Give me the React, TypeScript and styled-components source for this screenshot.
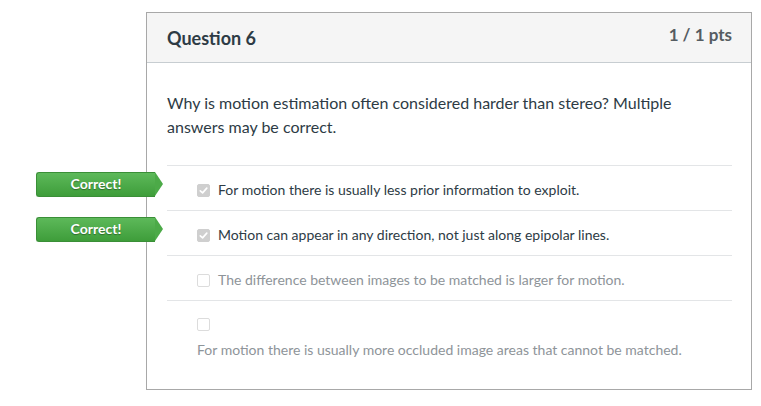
import styled, { createGlobalStyle } from 'styled-components';

const GlobalStyle = createGlobalStyle`
  body {
    margin: 0;
    background: #fff;
    font-family: Lato, 'Noto Sans', sans-serif;
    color: #2d3b45;
  }
`;

interface Answer {
  text: string;
  checked: boolean;
  correct: boolean;
  wrap?: boolean;
}

const answers: Answer[] = [
  { text: 'For motion there is usually less prior information to exploit.', checked: true, correct: true },
  { text: 'Motion can appear in any direction, not just along epipolar lines.', checked: true, correct: true },
  { text: 'The difference between images to be matched is larger for motion.', checked: false, correct: false },
  {
    text: 'For motion there is usually more occluded image areas that cannot be matched.',
    checked: false,
    correct: false,
    wrap: true,
  },
];

const CheckIcon = () => (
  <svg width="11" height="11" viewBox="0 0 12 12">
    <path d="M2.5 6.3 L5 8.6 L9.6 3.4" fill="none" stroke="#fff" strokeWidth="1.8" strokeLinecap="round" strokeLinejoin="round" />
  </svg>
);

const App = () => {
  return (
    <Page>
      <GlobalStyle />
      <Card>
        <Header>
          <Title>Question 6</Title>
          <Points>1 / 1 pts</Points>
        </Header>
        <Body>
          <QuestionText>
            Why is motion estimation often considered harder than stereo? Multiple answers may be correct.
          </QuestionText>
          <AnswerList>
            {answers.map((a) => (
              <AnswerRow key={a.text} wrap={!!a.wrap}>
                {a.correct && <CorrectFlag>Correct!</CorrectFlag>}
                <Box checked={a.checked} wrap={!!a.wrap}>
                  {a.checked && <CheckIcon />}
                </Box>
                <Label checked={a.checked} wrap={!!a.wrap}>
                  {a.text}
                </Label>
              </AnswerRow>
            ))}
          </AnswerList>
        </Body>
      </Card>
    </Page>
  );
};

export default App;

const Page = styled.div`
  padding: 12px 9px 0 146px;
`;

const Card = styled.div`
  width: 604px;
  border: 1px solid #a8a8a8;
  background: #fff;
`;

const Header = styled.div`
  display: flex;
  justify-content: space-between;
  align-items: flex-start;
  height: 49px;
  padding: 0 19px 0 20px;
  background: #f5f5f5;
  border-bottom: 1px solid #c7cdd1;
`;

const Title = styled.h2`
  margin: 13px 0 0;
  font-size: 18px;
  line-height: 24px;
  font-weight: 700;
  color: #2d3b45;
`;

const Points = styled.div`
  margin-top: 12px;
  font-size: 17px;
  line-height: 20px;
  font-weight: 700;
  color: #555c62;
`;

const Body = styled.div`
  padding: 28px 19px 19px 20px;
`;

const QuestionText = styled.p`
  margin: 0 0 26px;
  font-size: 16px;
  line-height: 24px;
  color: #2d3b45;
`;

const AnswerList = styled.div`
  display: flex;
  flex-direction: column;
`;

const AnswerRow = styled.div<{ wrap: boolean }>`
  position: relative;
  display: flex;
  flex-wrap: ${({ wrap }) => (wrap ? 'wrap' : 'nowrap')};
  align-items: ${({ wrap }) => (wrap ? 'flex-start' : 'center')};
  min-height: 20px;
  padding: 14px 0 10px 30px;
  border-top: 1px solid #e3e5e7;
`;

const CorrectFlag = styled.div`
  position: absolute;
  left: -131px;
  top: 6px;
  width: 119px;
  height: 25px;
  box-sizing: border-box;
  padding-bottom: 3px;
  display: flex;
  align-items: center;
  justify-content: center;
  background: linear-gradient(#5db95a, #3e9d3a);
  border: 1px solid #3a8f37;
  border-right: none;
  border-radius: 3px 0 0 3px;
  color: #fff;
  font-size: 14px;
  font-weight: 700;
  text-shadow: 0 1px 1px rgba(0, 0, 0, 0.35);

  &::after {
    content: '';
    position: absolute;
    right: -8px;
    top: -1px;
    border-top: 12.5px solid transparent;
    border-bottom: 12.5px solid transparent;
    border-left: 8px solid #4caa48;
  }
`;

const Box = styled.span<{ checked: boolean; wrap: boolean }>`
  flex: none;
  display: inline-flex;
  align-items: center;
  justify-content: center;
  width: 13px;
  height: 13px;
  box-sizing: border-box;
  border-radius: 2px;
  background: ${({ checked }) => (checked ? '#cfcfcf' : '#fff')};
  border: 1px solid ${({ checked }) => (checked ? '#cfcfcf' : '#dcdcdc')};
  margin-right: 8px;
  margin-top: ${({ wrap }) => (wrap ? '3px' : '0')};
`;

const Label = styled.span<{ checked: boolean; wrap: boolean }>`
  font-size: 14px;
  line-height: 20px;
  color: ${({ checked }) => (checked ? '#2d3b45' : '#8e9499')};
  ${({ wrap }) => (wrap ? 'flex-basis: 100%; margin-top: 9px;' : '')}
`;
